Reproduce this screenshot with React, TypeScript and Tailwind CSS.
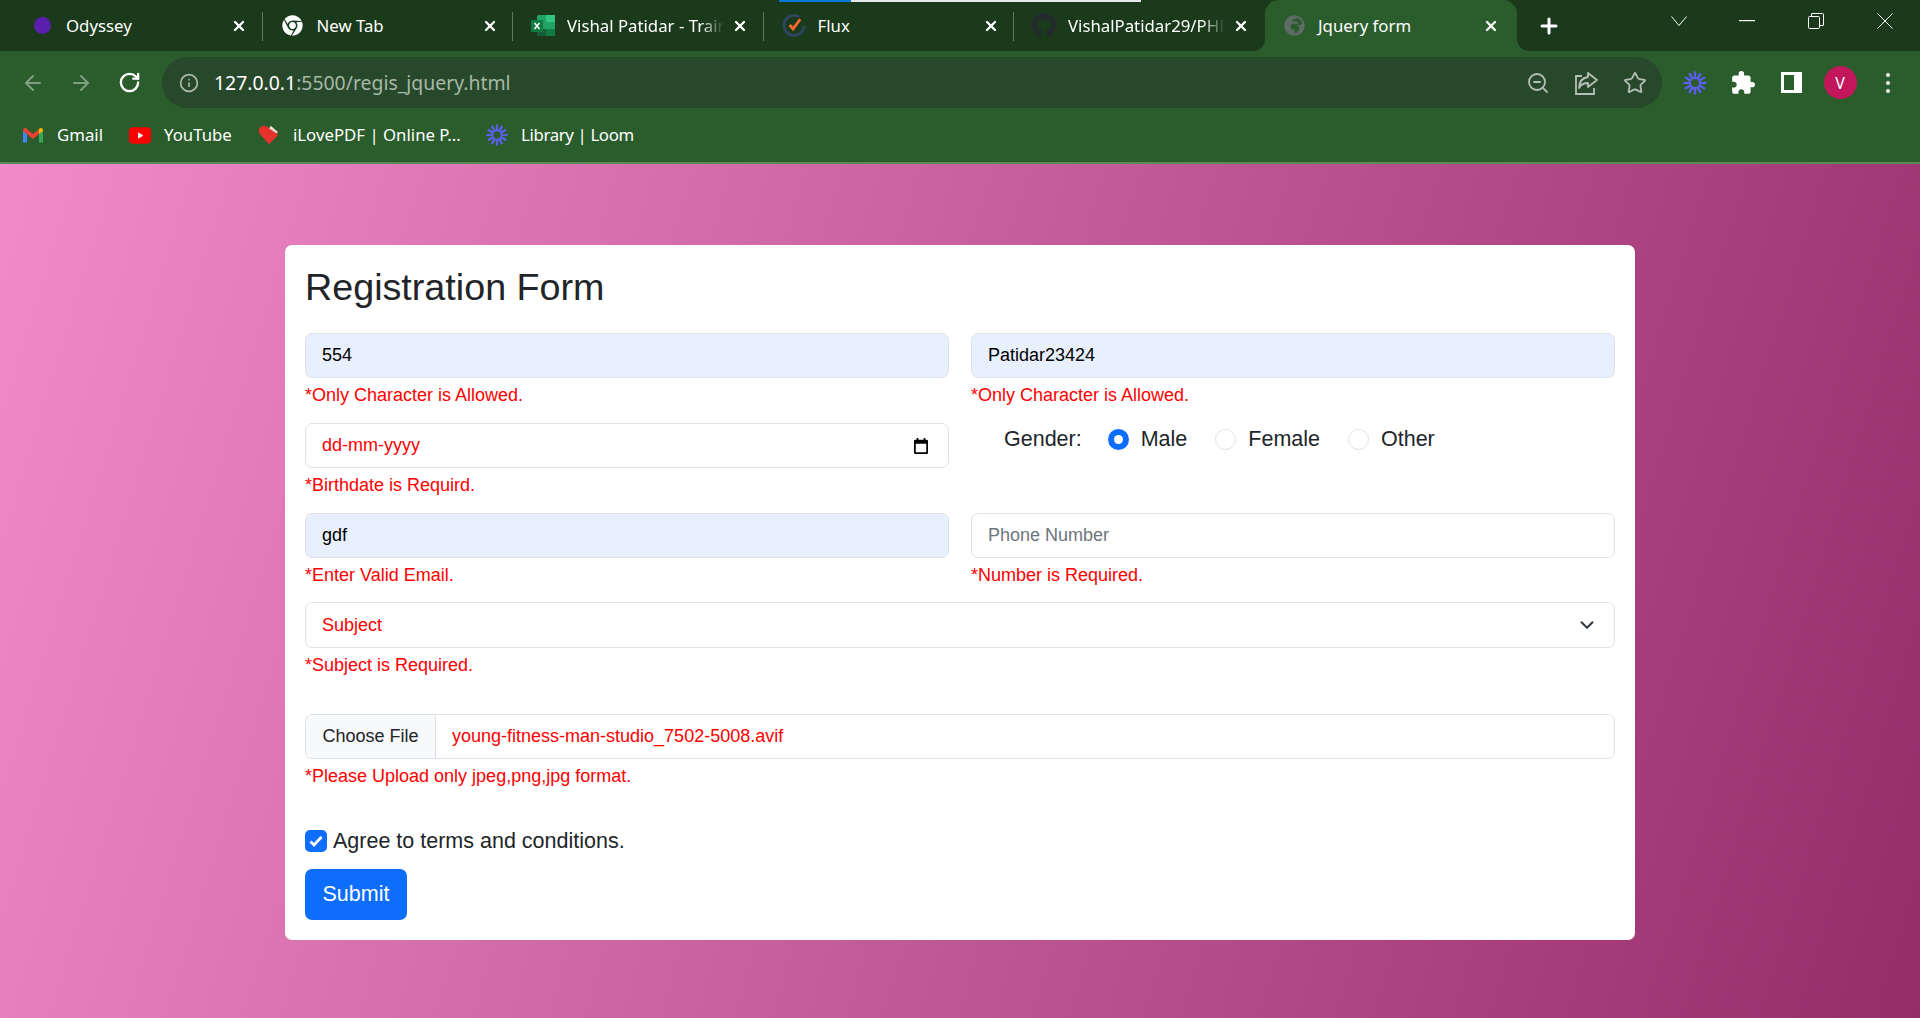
import { FaChrome, FaGithub, FaGlobeAfrica } from "react-icons/fa";
import { MdExtension } from "react-icons/md";
import { ArrowLeft, ArrowRight, ChevronDown, Info, Plus, RotateCw, Star, X, ZoomOut } from "lucide-react";

const uiFont = "font-['Noto_Sans',sans-serif]";

function LoomIcon({ size = 24 }: { size?: number }) {
  const spokes = [0, 30, 60, 90, 120, 150];
  return (
    <svg width={size} height={size} viewBox="0 0 24 24" fill="none">
      {spokes.map((deg) => (
        <line key={deg} x1="12" y1="0.500" x2="12" y2="23.500" stroke="#5b5ff0" strokeWidth="2.400" transform={`rotate(${deg} 12 12)`} />
      ))}
      <circle cx="12" cy="12" r="5" fill="#2a5c2c" stroke="#5b5ff0" strokeWidth="2" />
    </svg>
  );
}

function GmailIcon() {
  return (
    <svg width="22" height="18" viewBox="0 0 22 18" fill="none">
      <path d="M1 5v11.500h4V8z" fill="#4285f4" />
      <path d="M17 8v8.500h4V5z" fill="#34a853" />
      <path d="M1 5l4 3 6 5 6-5V3l-6 5-5-4-2-2C3 1 1 2 1 5z" fill="#ea4335" />
      <path d="M17 3v5l4-3c0-3-2-4-4-2z" fill="#fbbc04" />
    </svg>
  );
}

function YoutubeIcon() {
  return (
    <svg width="23" height="17" viewBox="0 0 23 17">
      <rect width="23" height="17" rx="4" fill="#f00" />
      <path d="M9.500 5v7l5.500-3.500z" fill="#fff" />
    </svg>
  );
}

function HeartIcon() {
  return (
    <svg width="24" height="22" viewBox="0 0 24 22">
      <path d="M12 21L2 10C-1 6 2 1 6.500 1c2.500 0 4 1 5.500 3l8 5c1.500 1 2 2 1 3z" fill="#e5322d" />
      <path d="M12 4l2-3 8 7-2 1z" fill="#f7d6d4" />
    </svg>
  );
}

function ExcelIcon() {
  return (
    <svg width="24" height="21" viewBox="0 0 24 21">
      <rect x="6" y="0" width="18" height="21" rx="1.500" fill="#21a366" />
      <rect x="15" y="0" width="9" height="7" fill="#33c481" />
      <rect x="15" y="7" width="9" height="7" fill="#21a366" />
      <rect x="15" y="14" width="9" height="7" fill="#107c41" />
      <rect x="6" y="14" width="9" height="7" fill="#185c37" />
      <rect x="0" y="5" width="12" height="12" rx="1" fill="#107c41" />
      <path d="M3.500 8l5 6M8.500 8l-5 6" stroke="#fff" strokeWidth="1.500" />
    </svg>
  );
}

function FluxIcon() {
  return (
    <svg width="25" height="25" viewBox="0 0 25 25" fill="none">
      <path d="M18 3.500A10.500 10.500 0 1 0 23 13" stroke="#2f4660" strokeWidth="3" />
      <path d="M8 12l3.500 4L19 6" stroke="#f26a2e" strokeWidth="3" />
    </svg>
  );
}

// old-style chrome share icon: open box with a curved arrow
function ShareIcon() {
  return (
    <svg width="25" height="24" viewBox="0 0 25 24" fill="none" stroke="currentColor" strokeWidth="1.800">
      <path d="M8 5H2v18h18v-6" />
      <path d="M14 2l9 7-9 7v-4c-4 0-7 1-9 5 0-6 3-10 9-11z" strokeLinejoin="round" />
    </svg>
  );
}

type TabInfo = { title: string; icon: React.ReactNode; fade?: boolean };

const tabs: TabInfo[] = [
  { title: "Odyssey", icon: <span className="h-[17px] w-[17px] rounded-full bg-[#5b1fb0]" /> },
  { title: "New Tab", icon: <FaChrome size={21} color="#fff" /> },
  { title: "Vishal Patidar - Trainee", icon: <ExcelIcon />, fade: true },
  { title: "Flux", icon: <FluxIcon /> },
  { title: "VishalPatidar29/PHP-Tasks", icon: <FaGithub size={25} color="#24292f" />, fade: true },
];

function Tab({ tab, last }: { tab: TabInfo; last: boolean }) {
  return (
    <div className="relative flex h-full w-[250.500px] items-center pl-[18px]">
      <div className="flex w-[24px] shrink-0 justify-center">{tab.icon}</div>
      <span
        className={`ml-[12px] w-[157px] overflow-hidden whitespace-nowrap text-[16.800px] text-white ${
          tab.fade ? "[mask-image:linear-gradient(to_right,#000_85%,transparent)]" : ""
        }`}
      >
        {tab.title}
      </span>
      <X size={16} strokeWidth={3.500} color="#fff" className="ml-[8px] shrink-0" />
      {!last && <span className="absolute right-0 top-[12px] h-[29px] w-px bg-[#5f7a60]" />}
    </div>
  );
}

function BrowserChrome() {
  return (
    <div className={`relative shrink-0 bg-[#2a5c2c] ${uiFont}`}>
      {/* page load bar sitting on top of the Flux/GitHub tabs */}
      <div className="absolute left-[779px] top-0 flex h-[2px] w-[362px] bg-[#e8e8e8]">
        <span className="w-[72px] bg-[#0a78d7]" />
      </div>
      <div className="flex h-[51px]">
        <div className="flex w-[1265px] rounded-br-[12px] bg-[#1a3a1b] pl-[12px]">
          {tabs.map((tab, i) => (
            <Tab key={tab.title} tab={tab} last={i === tabs.length - 1} />
          ))}
        </div>
        <div className="w-[252px] bg-[#1a3a1b]">
          <div className="flex h-full items-center rounded-t-[14px] bg-[#2a5c2c] pl-[19px]">
            <FaGlobeAfrica size={21} color="#5f6b66" />
            <span className="ml-[13px] w-[157px] text-[16.800px] text-white">Jquery form</span>
            <X size={16} strokeWidth={3.500} color="#fff" className="ml-[8px]" />
          </div>
        </div>
        <div className="flex flex-1 items-center rounded-bl-[12px] bg-[#1a3a1b] text-white">
          <Plus size={24} strokeWidth={3} className="ml-[20px]" />
          <div className="ml-[110px] flex items-center pb-[9px]">
            <svg width="16" height="10" viewBox="0 0 16 10" fill="none" stroke="#fff">
              <path d="M0.500 0.500L8 9.500l7.500-9" />
            </svg>
            <svg width="16" height="2" viewBox="0 0 16 2" className="ml-[52px]">
              <rect width="16" height="1.200" fill="#fff" />
            </svg>
            <svg width="16" height="16" viewBox="0 0 16 16" fill="none" stroke="#fff" className="ml-[53px]">
              <rect x="0.500" y="3.500" width="11" height="12" rx="1" />
              <path d="M3.500 3V1a.5.5 0 0 1 .5-.5h10.500a1 1 0 0 1 1 1V12a.5.5 0 0 1-.5.5h-3" />
            </svg>
            <svg width="16" height="16" viewBox="0 0 16 16" fill="none" stroke="#fff" className="ml-[53px]">
              <path d="M0.500 0.500l15 15M15.500 0.500l-15 15" />
            </svg>
          </div>
        </div>
      </div>
      <div className="flex h-[57px] items-center pt-[6px]">
        <div className="ml-[9px] flex w-[144px] text-white">
          <div className="flex w-[48px] justify-center"><ArrowLeft size={24} strokeWidth={2} color="#7f9f80" /></div>
          <div className="flex w-[48px] justify-center"><ArrowRight size={24} strokeWidth={2} color="#7f9f80" /></div>
          <div className="flex w-[48px] justify-center"><RotateCw size={23} strokeWidth={2.500} /></div>
        </div>
        <div className="ml-[9px] flex h-[51px] w-[1500px] items-center rounded-full bg-[#28482b] pl-[17px] pr-[15px]">
          <Info size={20} color="#b0bcb0" />
          <span className="ml-[15px] flex-1 text-[19.400px] text-[#a7b8a8]">
            <span className="text-white">127.0.0.1</span>:5500/regis_jquery.html
          </span>
          <div className="flex gap-[24px] text-[#b5bfb5]">
            <ZoomOut size={24} strokeWidth={1.800} />
            <ShareIcon />
            <Star size={24} strokeWidth={1.800} />
          </div>
        </div>
        <div className="ml-[9px] flex items-center text-white">
          <div className="flex w-[48px] justify-center"><LoomIcon /></div>
          <div className="flex w-[48px] justify-center"><MdExtension size={26} /></div>
          <div className="flex w-[48px] justify-center">
            <span className="h-[21px] w-[21px] border-[3px] border-r-[8px] border-white" />
          </div>
          <div className="flex w-[50px] justify-center">
            <span className="flex h-[33px] w-[33px] items-center justify-center rounded-full bg-[#c2185b] text-[16px]">V</span>
          </div>
          <div className="flex w-[46px] flex-col items-center gap-[4px]">
            <span className="h-[4px] w-[4px] rounded-full bg-white" />
            <span className="h-[4px] w-[4px] rounded-full bg-white" />
            <span className="h-[4px] w-[4px] rounded-full bg-white" />
          </div>
        </div>
      </div>
      <div className="flex h-[56px] items-center border-b-2 border-[#5a8a5c] pl-[22px] text-[16.800px] text-white">
        <div className="flex w-[107px] items-center">
          <div className="flex w-[22px] justify-center"><GmailIcon /></div>
          <span className="ml-[13px]">Gmail</span>
        </div>
        <div className="flex w-[129px] items-center">
          <div className="flex w-[22px] justify-center"><YoutubeIcon /></div>
          <span className="ml-[13px]">YouTube</span>
        </div>
        <div className="flex w-[228px] items-center">
          <div className="flex w-[22px] justify-center"><HeartIcon /></div>
          <span className="ml-[13px]">iLovePDF | Online P...</span>
        </div>
        <div className="flex items-center">
          <div className="flex w-[22px] justify-center"><LoomIcon /></div>
          <span className="ml-[13px] tracking-[-0.350px]">Library | Loom</span>
        </div>
      </div>
    </div>
  );
}

const inputClass = "flex h-[45px] w-full items-center rounded-[7px] border border-[#dee2e6] px-[16px] text-[18px]";

function FieldError({ text }: { text: string }) {
  return <div className="mt-[4px] text-[18px] leading-[26px] text-[#ff0000]">{text}</div>;
}

function Radio({ label, checked }: { label: string; checked?: boolean }) {
  return (
    <label className="flex items-center gap-[12px]">
      {checked ? (
        <span className="flex h-[21px] w-[21px] items-center justify-center rounded-full bg-[#0d6efd]">
          <span className="h-[9px] w-[9px] rounded-full bg-white" />
        </span>
      ) : (
        <span className="h-[21px] w-[21px] rounded-full border border-[#dee2e6] bg-white" />
      )}
      {label}
    </label>
  );
}

export default function App() {
  return (
    <div className="flex h-screen flex-col overflow-hidden font-['Liberation_Sans',Arial,sans-serif] text-[#212529]">
      <BrowserChrome />
      <main className="flex-1 bg-[linear-gradient(107deg,#f28ac9_0%,#962c6a_100%)] pl-[285px] pt-[81px]">
        <form className="w-[1350px] rounded-[7px] bg-white p-[20px]">
          <h2 className="mb-[24px] text-[37.700px] leading-[44px]">Registration Form</h2>

          <div className="grid grid-cols-2 gap-x-[22px]">
            <div className="h-[90px]">
              <input readOnly value="554" className={`${inputClass} bg-[#e8f0fe] text-black`} />
              <FieldError text="*Only Character is Allowed." />
            </div>
            <div className="h-[90px]">
              <input readOnly value="Patidar23424" className={`${inputClass} bg-[#e8f0fe] text-black`} />
              <FieldError text="*Only Character is Allowed." />
            </div>

            <div className="h-[90px]">
              <div className={`${inputClass} justify-between text-[#ff0000]`}>
                dd-mm-yyyy
                <svg width="14" height="16" viewBox="0 0 16 18" className="mr-[4px]" preserveAspectRatio="none">
                  <path d="M3 0h2v2h6V0h2v2h1.500A1.500 1.500 0 0 1 16 3.500v13a1.500 1.500 0 0 1-1.500 1.500h-13A1.500 1.500 0 0 1 0 16.500v-13A1.500 1.500 0 0 1 1.500 2H3zM2 6.500V16h12V6.500z" fill="#000" />
                </svg>
              </div>
              <FieldError text="*Birthdate is Requird." />
            </div>
            <div className="flex h-[90px] items-start gap-[28px] pl-[33px] pt-[1px] text-[21.500px] leading-[31px]">
              <span className="mr-[-2px]">Gender:</span>
              <Radio label="Male" checked />
              <Radio label="Female" />
              <Radio label="Other" />
            </div>

            <div className="h-[89px]">
              <input readOnly value="gdf" className={`${inputClass} bg-[#e8f0fe] text-black`} />
              <FieldError text="*Enter Valid Email." />
            </div>
            <div className="h-[89px]">
              <input readOnly placeholder="Phone Number" className={`${inputClass} bg-white placeholder:text-[#6c757d]`} />
              <FieldError text="*Number is Required." />
            </div>
          </div>

          <div className="h-[112px]">
            <div className="flex h-[46px] w-full items-center justify-between rounded-[7px] border border-[#dee2e6] px-[16px] text-[18px] text-[#ff0000]">
              Subject
              <ChevronDown size={22} strokeWidth={2.200} color="#343a40" />
            </div>
            <FieldError text="*Subject is Required." />
          </div>

          <div className="h-[116px]">
            <div className="flex h-[45px] items-center overflow-hidden rounded-[7px] border border-[#dee2e6] text-[18px]">
              <span className="flex h-full w-[130px] items-center justify-center border-r border-[#dee2e6] bg-[#f8f9fa]">Choose File</span>
              <span className="ml-[16px] text-[#ff0000]">young-fitness-man-studio_7502-5008.avif</span>
            </div>
            <FieldError text="*Please Upload only jpeg,png,jpg format." />
          </div>

          <label className="flex h-[39px] items-start gap-[6px] text-[21.500px] leading-[22px]">
            <span className="flex h-[22px] w-[22px] items-center justify-center rounded-[5px] bg-[#0d6efd]">
              <svg width="14" height="12" viewBox="0 0 14 12" fill="none" stroke="#fff" strokeWidth="2.800">
                <path d="M1.500 6.500l3.500 3.500 7.500-8" />
              </svg>
            </span>
            Agree to terms and conditions.
          </label>

          <button type="button" className="h-[51px] w-[102px] rounded-[7px] bg-[#0d6efd] text-[21.500px] text-white">Submit</button>
        </form>
      </main>
    </div>
  );
}
